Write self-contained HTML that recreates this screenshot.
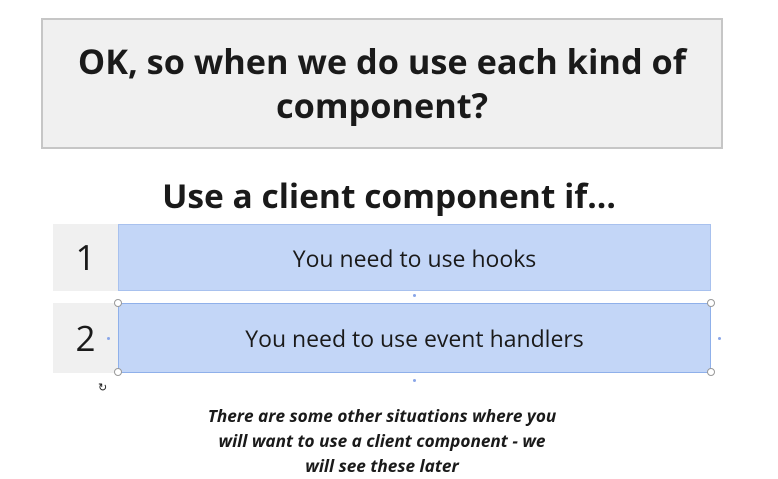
<!DOCTYPE html>
<html><head><style>
body{margin:0;width:778px;height:478px;background:#fff;position:relative;overflow:hidden;font-family:"Open Sans","Liberation Sans",sans-serif;color:#1a1a1a}
.t{position:absolute;left:41px;top:18px;width:678px;height:127px;background:#f0f0f0;border:2px solid #c6c6c6;text-align:center;font-weight:bold;font-size:34.3px;line-height:44px;display:flex;align-items:center;justify-content:center}
.h{position:absolute;left:0;width:778px;top:172px;text-align:center;font-weight:bold;font-size:33.5px}
.n{position:absolute;left:53px;width:65px;background:#f0f0f0;font-size:35px;text-align:center;display:flex;align-items:center;justify-content:center}
.b{position:absolute;left:118px;width:591px;background:#c3d6f7;border:1px solid #a8c1ee;font-size:23px;display:flex;align-items:center;justify-content:center}
.f{position:absolute;left:-7px;width:778px;top:404px;text-align:center;font-weight:bold;font-style:italic;font-size:17.2px;line-height:25px}
.d{position:absolute;width:6px;height:6px;border:1px solid #999;border-radius:50%;background:#fff}
.p{position:absolute;width:3px;height:3px;background:#8aa6e8;border-radius:50%}
</style></head><body>
<div class="t">OK, so when we do use each kind of<br>component?</div>
<div class="h">Use a client component if...</div>
<div class="n" style="top:224px;height:67px">1</div>
<div class="b" style="top:224px;height:65px">You need to use hooks</div>
<div class="n" style="top:303px;height:70px">2</div>
<div class="b" style="top:303px;height:68px;border-color:#8fb0ea">You need to use event handlers</div>
<div class="d" style="left:114px;top:299px"></div><div class="d" style="left:707px;top:299px"></div>
<div class="d" style="left:114px;top:368px"></div><div class="d" style="left:707px;top:368px"></div>
<div class="p" style="left:413px;top:294px"></div><div class="p" style="left:413px;top:379px"></div>
<div class="p" style="left:107px;top:337px"></div><div class="p" style="left:718px;top:337px"></div>
<div style="position:absolute;left:98px;top:380px;font-size:11px">↻</div>
<div class="f">There are some other situations where you<br>will want to use a client component - we<br>will see these later</div>
</body></html>
